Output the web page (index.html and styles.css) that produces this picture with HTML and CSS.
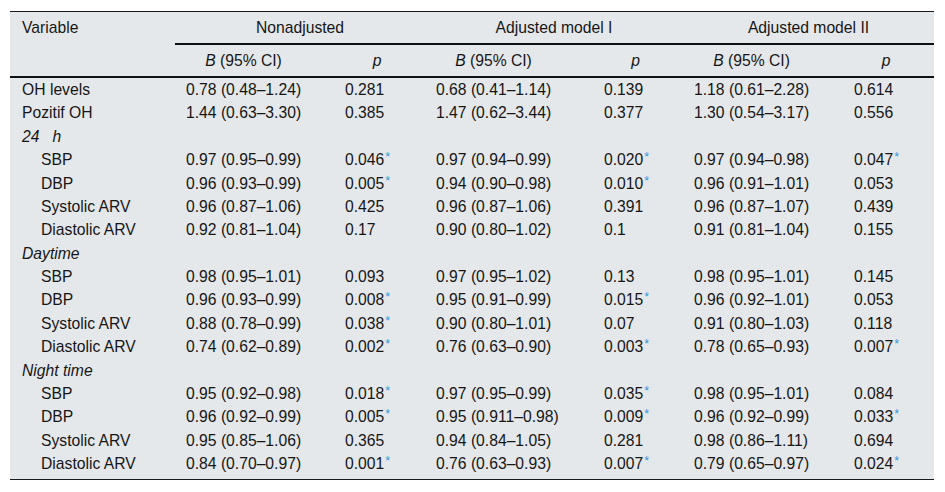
FILE: index.html
```html
<!DOCTYPE html>
<html>
<head>
<meta charset="utf-8">
<link rel="stylesheet" href="styles.css">
</head>
<body>
<table class="tbl">
  <colgroup>
    <col class="c-var"><col class="c-b1"><col class="c-p1"><col class="c-b2"><col class="c-p2"><col class="c-b3"><col class="c-p3">
  </colgroup>
  <thead>
    <tr>
      <th class="h-var" rowspan="2">Variable</th>
      <th class="h-grp g1" colspan="2">Nonadjusted</th>
      <th class="h-grp g2" colspan="2">Adjusted model I</th>
      <th class="h-grp g3" colspan="2">Adjusted model II</th>
    </tr>
    <tr>
      <th class="h-sub sb1"><i>B</i> (95% CI)</th>
      <th class="h-sub sp"><i>p</i></th>
      <th class="h-sub sb2"><i>B</i> (95% CI)</th>
      <th class="h-sub sp"><i>p</i></th>
      <th class="h-sub sb3"><i>B</i> (95% CI)</th>
      <th class="h-sub sp"><i>p</i></th>
    </tr>
  </thead>
  <tbody>
    <tr><td>OH levels</td><td>0.78 (0.48–1.24)</td><td>0.281</td><td>0.68 (0.41–1.14)</td><td>0.139</td><td>1.18 (0.61–2.28)</td><td>0.614</td></tr>
    <tr><td>Pozitif OH</td><td>1.44 (0.63–3.30)</td><td>0.385</td><td>1.47 (0.62–3.44)</td><td>0.377</td><td>1.30 (0.54–3.17)</td><td>0.556</td></tr>
    <tr><td class="grp"><i>24&nbsp;&nbsp;&nbsp;h</i></td><td></td><td></td><td></td><td></td><td></td><td></td></tr>
    <tr><td class="ind">SBP</td><td>0.97 (0.95–0.99)</td><td>0.046<sup class="sig">*</sup></td><td>0.97 (0.94–0.99)</td><td>0.020<sup class="sig">*</sup></td><td>0.97 (0.94–0.98)</td><td>0.047<sup class="sig">*</sup></td></tr>
    <tr><td class="ind">DBP</td><td>0.96 (0.93–0.99)</td><td>0.005<sup class="sig">*</sup></td><td>0.94 (0.90–0.98)</td><td>0.010<sup class="sig">*</sup></td><td>0.96 (0.91–1.01)</td><td>0.053</td></tr>
    <tr><td class="ind">Systolic ARV</td><td>0.96 (0.87–1.06)</td><td>0.425</td><td>0.96 (0.87–1.06)</td><td>0.391</td><td>0.96 (0.87–1.07)</td><td>0.439</td></tr>
    <tr><td class="ind">Diastolic ARV</td><td>0.92 (0.81–1.04)</td><td>0.17</td><td>0.90 (0.80–1.02)</td><td>0.1</td><td>0.91 (0.81–1.04)</td><td>0.155</td></tr>
    <tr><td class="grp"><i>Daytime</i></td><td></td><td></td><td></td><td></td><td></td><td></td></tr>
    <tr><td class="ind">SBP</td><td>0.98 (0.95–1.01)</td><td>0.093</td><td>0.97 (0.95–1.02)</td><td>0.13</td><td>0.98 (0.95–1.01)</td><td>0.145</td></tr>
    <tr><td class="ind">DBP</td><td>0.96 (0.93–0.99)</td><td>0.008<sup class="sig">*</sup></td><td>0.95 (0.91–0.99)</td><td>0.015<sup class="sig">*</sup></td><td>0.96 (0.92–1.01)</td><td>0.053</td></tr>
    <tr><td class="ind">Systolic ARV</td><td>0.88 (0.78–0.99)</td><td>0.038<sup class="sig">*</sup></td><td>0.90 (0.80–1.01)</td><td>0.07</td><td>0.91 (0.80–1.03)</td><td>0.118</td></tr>
    <tr><td class="ind">Diastolic ARV</td><td>0.74 (0.62–0.89)</td><td>0.002<sup class="sig">*</sup></td><td>0.76 (0.63–0.90)</td><td>0.003<sup class="sig">*</sup></td><td>0.78 (0.65–0.93)</td><td>0.007<sup class="sig">*</sup></td></tr>
    <tr><td class="grp"><i>Night time</i></td><td></td><td></td><td></td><td></td><td></td><td></td></tr>
    <tr><td class="ind">SBP</td><td>0.95 (0.92–0.98)</td><td>0.018<sup class="sig">*</sup></td><td>0.97 (0.95–0.99)</td><td>0.035<sup class="sig">*</sup></td><td>0.98 (0.95–1.01)</td><td>0.084</td></tr>
    <tr><td class="ind">DBP</td><td>0.96 (0.92–0.99)</td><td>0.005<sup class="sig">*</sup></td><td>0.95 (0.911–0.98)</td><td>0.009<sup class="sig">*</sup></td><td>0.96 (0.92–0.99)</td><td>0.033<sup class="sig">*</sup></td></tr>
    <tr><td class="ind">Systolic ARV</td><td>0.95 (0.85–1.06)</td><td>0.365</td><td>0.94 (0.84–1.05)</td><td>0.281</td><td>0.98 (0.86–1.11)</td><td>0.694</td></tr>
    <tr class="last"><td class="ind">Diastolic ARV</td><td>0.84 (0.70–0.97)</td><td>0.001<sup class="sig">*</sup></td><td>0.76 (0.63–0.93)</td><td>0.007<sup class="sig">*</sup></td><td>0.79 (0.65–0.97)</td><td>0.024<sup class="sig">*</sup></td></tr>
  </tbody>
</table>
</body>
</html>
```
FILE: styles.css
```css
html, body {
  margin: 0;
  padding: 0;
  background: #ffffff;
}
body {
  padding-top: 11px;
  font-family: "Liberation Sans", Arial, sans-serif;
  font-size: 15.7px;
  color: #161616;
}
.tbl {
  margin-left: 10px;
  width: 924px;
  table-layout: fixed;
  border-collapse: separate;
  border-spacing: 0;
  background: #e5e8eb;
  border-top: 1px solid #1a1a1a;
}
.c-var { width: 165px; }
.c-b1 { width: 159px; }
.c-p1 { width: 91px; }
.c-b2 { width: 168px; }
.c-p2 { width: 90px; }
.c-b3 { width: 160px; }
.c-p3 { width: 91px; }

th {
  font-weight: normal;
  line-height: 31px;
  padding: 0;
  white-space: nowrap;
}
.h-var {
  text-align: left;
  vertical-align: top;
  padding-left: 12px;
  border-bottom: 2px solid #111;
}
.h-grp {
  text-align: center;
  border-bottom: 2px solid #111;
}
.h-sub {
  text-align: center;
  border-bottom: 2px solid #111;
}
.sb1 { padding: 0 33px 0 11px; }
.sb2 { padding: 0 42px 0 11px; }
.sb3 { padding: 0 34px 0 11px; }
.sp { padding: 0 16px 0 11px; }

td {
  line-height: 23.375px;
  padding: 0 0 0 11px;
  white-space: nowrap;
  vertical-align: middle;
}
td:first-child {
  padding-left: 12px;
}
td.ind {
  padding-left: 31px;
}
.last td {
  padding-bottom: 4px;
  border-bottom: 1px solid #1a1a1a;
}
.last td:first-child {
  padding-left: 31px;
}
.sig {
  color: #2f9ad8;
  font-size: 12.5px;
  line-height: 0;
  vertical-align: 4px;
  margin-left: 1px;
}
```
